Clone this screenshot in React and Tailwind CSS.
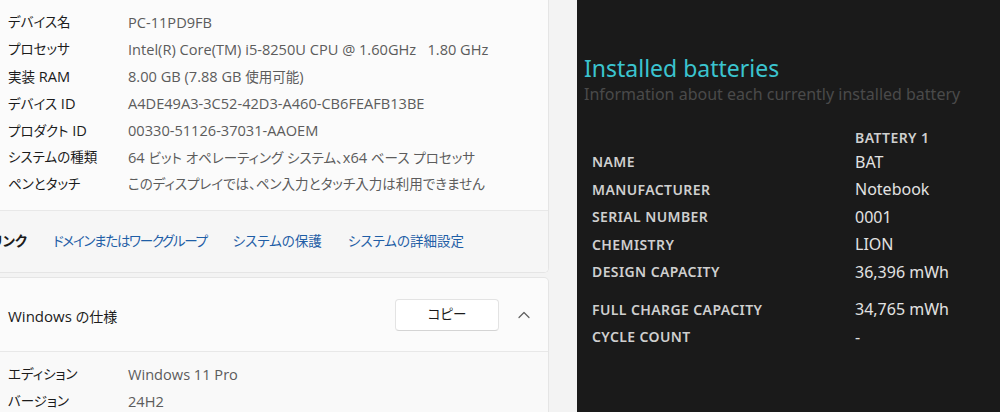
import React from "react";

const specs = [
  ["デバイス名", "PC-11PD9FB"],
  ["プロセッサ", "Intel(R) Core(TM) i5-8250U CPU @ 1.60GHz\u00a0\u00a0\u00a01.80 GHz"],
  ["実装 RAM", "8.00 GB (7.88 GB 使用可能)"],
  ["デバイス ID", "A4DE49A3-3C52-42D3-A460-CB6FEAFB13BE"],
  ["プロダクト ID", "00330-51126-37031-AAOEM"],
  ["システムの種類", "64 ビット オペレーティング システム、x64 ベース プロセッサ"],
  ["ペンとタッチ", "このディスプレイでは、ペン入力とタッチ入力は利用できません"],
];

const battery = [
  ["NAME", "BAT"],
  ["MANUFACTURER", "Notebook"],
  ["SERIAL NUMBER", "0001"],
  ["CHEMISTRY", "LION"],
  ["DESIGN CAPACITY", "36,396 mWh"],
];
const battery2 = [
  ["FULL CHARGE CAPACITY", "34,765 mWh"],
  ["CYCLE COUNT", "-"],
];

// Latin runs are set a little larger than the Japanese runs, as Segoe UI is next to Yu Gothic UI.
function Mixed({ text }) {
  const parts = text.split(/([\u0020-\u007E\u00A0]+)/).filter(Boolean);
  return parts.map((p, i) =>
    /^[\u0020-\u007E\u00A0]+$/.test(p) ? (
      <span key={i} className="text-[14.6px]">
        {p}
      </span>
    ) : (
      <span key={i}>{p}</span>
    )
  );
}

function Row({ label, value }) {
  return (
    <div className="flex h-[27px] items-center text-[13.5px]">
      <div className="w-[128px] shrink-0 whitespace-nowrap pl-[8px] text-[#1b1b1b]">
        <Mixed text={label} />
      </div>
      <div className="whitespace-nowrap text-[#5c5c5c]">
        <Mixed text={value} />
      </div>
    </div>
  );
}

function BRow({ label, value }) {
  return (
    <div className="flex h-[27.5px] items-center">
      <div className="w-[263px] text-[14px] font-semibold tracking-[0.4px] text-[#cfcfcf]">{label}</div>
      <div className="text-[16px] text-[#e2e2e2]">{value}</div>
    </div>
  );
}

export default function App() {
  return (
    <div className="flex h-[412px] w-[1000px] overflow-hidden bg-[#f3f3f3]">
      <div className="flex w-[577px] shrink-0 flex-col font-['Open_Sans','Noto_Sans_CJK_JP',sans-serif] [font-feature-settings:'palt']">
        <div className="w-[549px] shrink-0 overflow-hidden rounded-br-[5px] border border-l-0 border-t-0 border-[#e5e5e5] bg-[#fbfbfb]">
          <div className="pb-[12px] pt-[9px]">
            {specs.map(([l, v]) => (
              <Row key={l} label={l} value={v} />
            ))}
          </div>
          <div className="flex h-[62px] items-center whitespace-nowrap border-t border-[#e8e8e8] bg-[#f6f6f6] text-[13.5px]">
            <div className="flex w-[27px] shrink-0 justify-end">
              <span className="font-bold text-[#1b1b1b]">関連リンク</span>
            </div>
            <span className="ml-[26px] tracking-[-1.3px] text-[#1f5ea6]">ドメインまたはワークグループ</span>
            <span className="ml-[26px] text-[#1f5ea6]">システムの保護</span>
            <span className="ml-[26px] text-[#1f5ea6]">システムの詳細設定</span>
          </div>
        </div>
        <div className="mt-[4px] w-[549px] shrink-0 grow rounded-tr-[5px] border border-l-0 border-[#e5e5e5] bg-[#fbfbfb]">
          <div className="flex h-[74px] items-center border-b border-[#e8e8e8] pl-[8px]">
            <span className="flex-1 pt-[3px] text-[14px] text-[#1b1b1b]">
              <span className="text-[15px]">Windows </span>の仕様
            </span>
            <div className="flex h-[32px] w-[104px] items-center justify-center rounded-[4px] border border-[#e3e3e3] border-b-[#d4d4d4] bg-white text-[13.5px] text-[#1b1b1b]">
              コピー
            </div>
            <div className="flex w-[49px] items-center justify-center">
              <svg width="12" height="8" viewBox="0 0 12 8" fill="none">
                <path d="M1 6.5 L6 1.5 L11 6.5" stroke="#5f5f5f" strokeWidth="1.2" strokeLinecap="round" strokeLinejoin="round" />
              </svg>
            </div>
          </div>
          <div className="bg-[#f9f9f9] pt-[9px]">
            <Row label="エディション" value="Windows 11 Pro" />
            <Row label="バージョン" value="24H2" />
          </div>
        </div>
      </div>
      <div className="flex-1 bg-[#1a1a1a] pl-[7px] pt-[54px] font-['Noto_Sans',sans-serif]">
        <div className="text-[23px] leading-[28px] text-[#3bc4cf]">Installed batteries</div>
        <div className="text-[16px] leading-[24px] text-[#4a4a4a]">Information about each currently installed battery</div>
        <div className="pl-[8px] pt-[20px]">
          <div className="flex h-[22px] items-center">
            <div className="w-[263px]" />
            <div className="text-[14px] font-semibold tracking-[0.4px] text-[#cfcfcf]">BATTERY 1</div>
          </div>
          {battery.map(([l, v]) => (
            <BRow key={l} label={l} value={v} />
          ))}
          <div className="h-[10px]" />
          {battery2.map(([l, v]) => (
            <BRow key={l} label={l} value={v} />
          ))}
        </div>
      </div>
    </div>
  );
}
